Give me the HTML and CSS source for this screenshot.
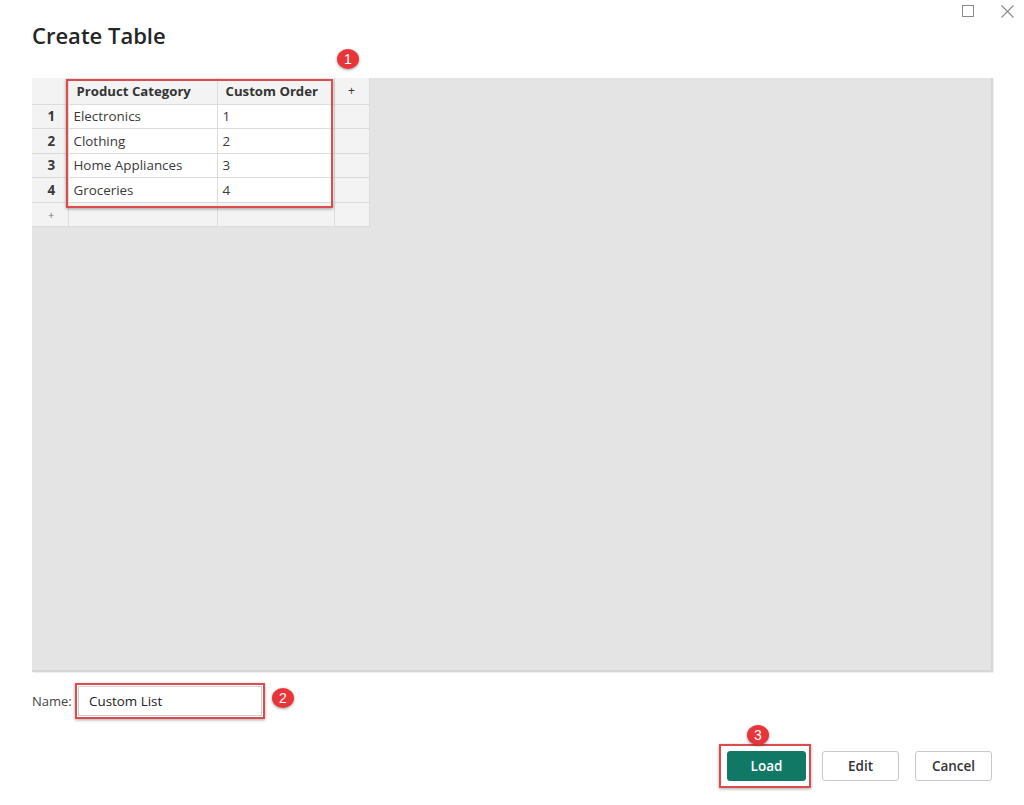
FILE: index.html
```html
<!DOCTYPE html>
<html lang="en">
<head>
    <meta charset="UTF-8">
    <meta name="viewport" content="width=device-width, initial-scale=1.0">
    <title>Create Table</title>
    <link rel="stylesheet" href="styles.css">
</head>
<body>
    <div class="dialog">
        <div class="window-controls">
            <svg width="12" height="12" viewBox="0 0 12 12"><rect x="0.5" y="0.5" width="11" height="11" fill="none" stroke="#8a8a8a" stroke-width="1"/></svg>
            <svg width="13" height="13" viewBox="0 0 13 13"><path d="M0.5 0.5 L12.5 12.5 M12.5 0.5 L0.5 12.5" stroke="#8a8a8a" stroke-width="1.1"/></svg>
        </div>
        <h1>Create Table</h1>

        <div class="sheet">
            <table class="grid">
                <tr class="head">
                    <td class="num"></td>
                    <td class="col-a">Product Category</td>
                    <td class="col-b">Custom Order</td>
                    <td class="add">+</td>
                </tr>
                <tr>
                    <td class="num">1</td>
                    <td>Electronics</td>
                    <td>1</td>
                    <td class="add"></td>
                </tr>
                <tr>
                    <td class="num">2</td>
                    <td>Clothing</td>
                    <td>2</td>
                    <td class="add"></td>
                </tr>
                <tr>
                    <td class="num">3</td>
                    <td>Home Appliances</td>
                    <td>3</td>
                    <td class="add"></td>
                </tr>
                <tr>
                    <td class="num">4</td>
                    <td>Groceries</td>
                    <td>4</td>
                    <td class="add"></td>
                </tr>
                <tr class="new-row">
                    <td class="num plus">+</td>
                    <td></td>
                    <td></td>
                    <td class="add"></td>
                </tr>
            </table>
            <div class="mark mark-cols"></div>
            <span class="badge badge-1">1</span>
        </div>

        <div class="name-row">
            <label for="tbl-name">Name:</label>
            <div class="mark-field">
                <input id="tbl-name" type="text" value="Custom List">
            </div>
            <span class="badge badge-2">2</span>
        </div>

        <div class="actions">
            <div class="mark-btn">
                <button class="btn primary">Load</button>
                <span class="badge badge-3">3</span>
            </div>
            <button class="btn">Edit</button>
            <button class="btn">Cancel</button>
        </div>
    </div>
</body>
</html>
```

FILE: styles.css
```css
* {
    margin: 0;
    padding: 0;
    box-sizing: border-box;
}
body {
    background: #fff;
    font-family: "Open Sans", "Noto Sans", sans-serif;
    color: #333;
}
.dialog {
    width: 1024px;
    height: 805px;
    padding: 0 31px 0 32px;
    display: flex;
    flex-direction: column;
}
.window-controls {
    display: flex;
    justify-content: flex-end;
    align-items: center;
    gap: 27px;
    height: 20px;
    padding-top: 2px;
    margin-right: -21px;
}
h1 {
    font-size: 22px;
    font-weight: 600;
    color: #252525;
    height: 58px;
    line-height: 30px;
}
.sheet {
    position: relative;
    height: 594px;
    background: #e4e4e4;
    border-right: 2px solid #d6d6d6;
    border-bottom: 2px solid #d6d6d6;
    box-shadow: 1px 1px 0 #eeeeee;
}
.grid {
    border-collapse: collapse;
    font-size: 13.4px;
    color: #3a3a3a;
}
.grid td {
    border: 1px solid #dcdcdc;
    background: #fff;
    height: 24.6px;
    padding: 0 5px;
    white-space: nowrap;
}
.grid tr:first-child td {
    border-top: none;
}
.grid td:first-child {
    border-left: none;
}
.grid .head td {
    height: 26px;
    background: #f3f3f3;
    font-weight: 700;
    font-size: 13.2px;
    color: #333;
    padding: 0 8px;
}
.grid .num {
    width: 36px;
    background: #f3f3f3;
    font-weight: 700;
    text-align: center;
    padding-left: 8px;
}
.grid .col-a {
    width: 149px;
}
.grid .col-b {
    width: 117px;
}
.grid .add {
    width: 35px;
    background: #f3f3f3;
    text-align: center;
    font-weight: 400;
    font-size: 12px;
}
.grid .head .add {
    font-weight: 400;
    font-size: 12px;
    padding: 0;
}
.grid .new-row td {
    background: #f3f3f3;
}
.grid .plus {
    font-weight: 400;
    font-size: 11px;
    color: #777;
}

/* annotation boxes and numbered badges */
.mark {
    position: absolute;
    border: 2px solid #dc4c4c;
    box-shadow: 0 1px 3px rgba(0, 0, 0, 0.35);
}
.mark-cols {
    left: 34px;
    top: 1px;
    width: 267px;
    height: 129px;
}
.badge {
    display: inline-flex;
    align-items: center;
    justify-content: center;
    width: 22px;
    height: 20px;
    border-radius: 50%;
    background: #e8353a;
    color: #fff;
    font-family: "Liberation Sans", sans-serif;
    font-size: 14px;
    box-shadow: 0 1px 3px rgba(0, 0, 0, 0.4);
}
.badge-1 {
    position: absolute;
    left: 305px;
    top: -29px;
}
.name-row {
    display: flex;
    align-items: center;
    margin-top: 11px;
    height: 36px;
}
.name-row label {
    font-size: 13px;
    color: #444;
    width: 43px;
}
.mark-field {
    border: 2px solid #dc4c4c;
    padding: 1px;
    box-shadow: 0 1px 3px rgba(0, 0, 0, 0.35);
    background: #fff;
}
.mark-field input {
    display: block;
    width: 184px;
    height: 30px;
    border: 1px solid #d0d0d0;
    padding: 0 10px;
    font-family: "Open Sans", "Noto Sans", sans-serif;
    font-size: 13.4px;
    color: #222;
    outline: none;
}
.badge-2 {
    margin-left: 7px;
    margin-top: -6px;
}
.actions {
    display: flex;
    justify-content: flex-end;
    align-items: center;
    gap: 16px;
    margin-top: 25px;
    padding-right: 1px;
}
.mark-btn {
    position: relative;
    border: 2px solid #dc4c4c;
    padding: 5px 3px 5px 6px;
    box-shadow: 0 1px 3px rgba(0, 0, 0, 0.35);
    margin-right: -5px;
}
.badge-3 {
    position: absolute;
    left: 26px;
    top: -21px;
}
.btn {
    display: block;
    height: 30px;
    width: 77px;
    border: 1px solid #c8c8c8;
    border-radius: 3px;
    background: #fff;
    font-family: "Open Sans", "Noto Sans", sans-serif;
    font-size: 13.5px;
    font-weight: 600;
    color: #333;
}
.btn.primary {
    width: 79px;
    background: #117865;
    border-color: #117865;
    color: #fff;
}
```
